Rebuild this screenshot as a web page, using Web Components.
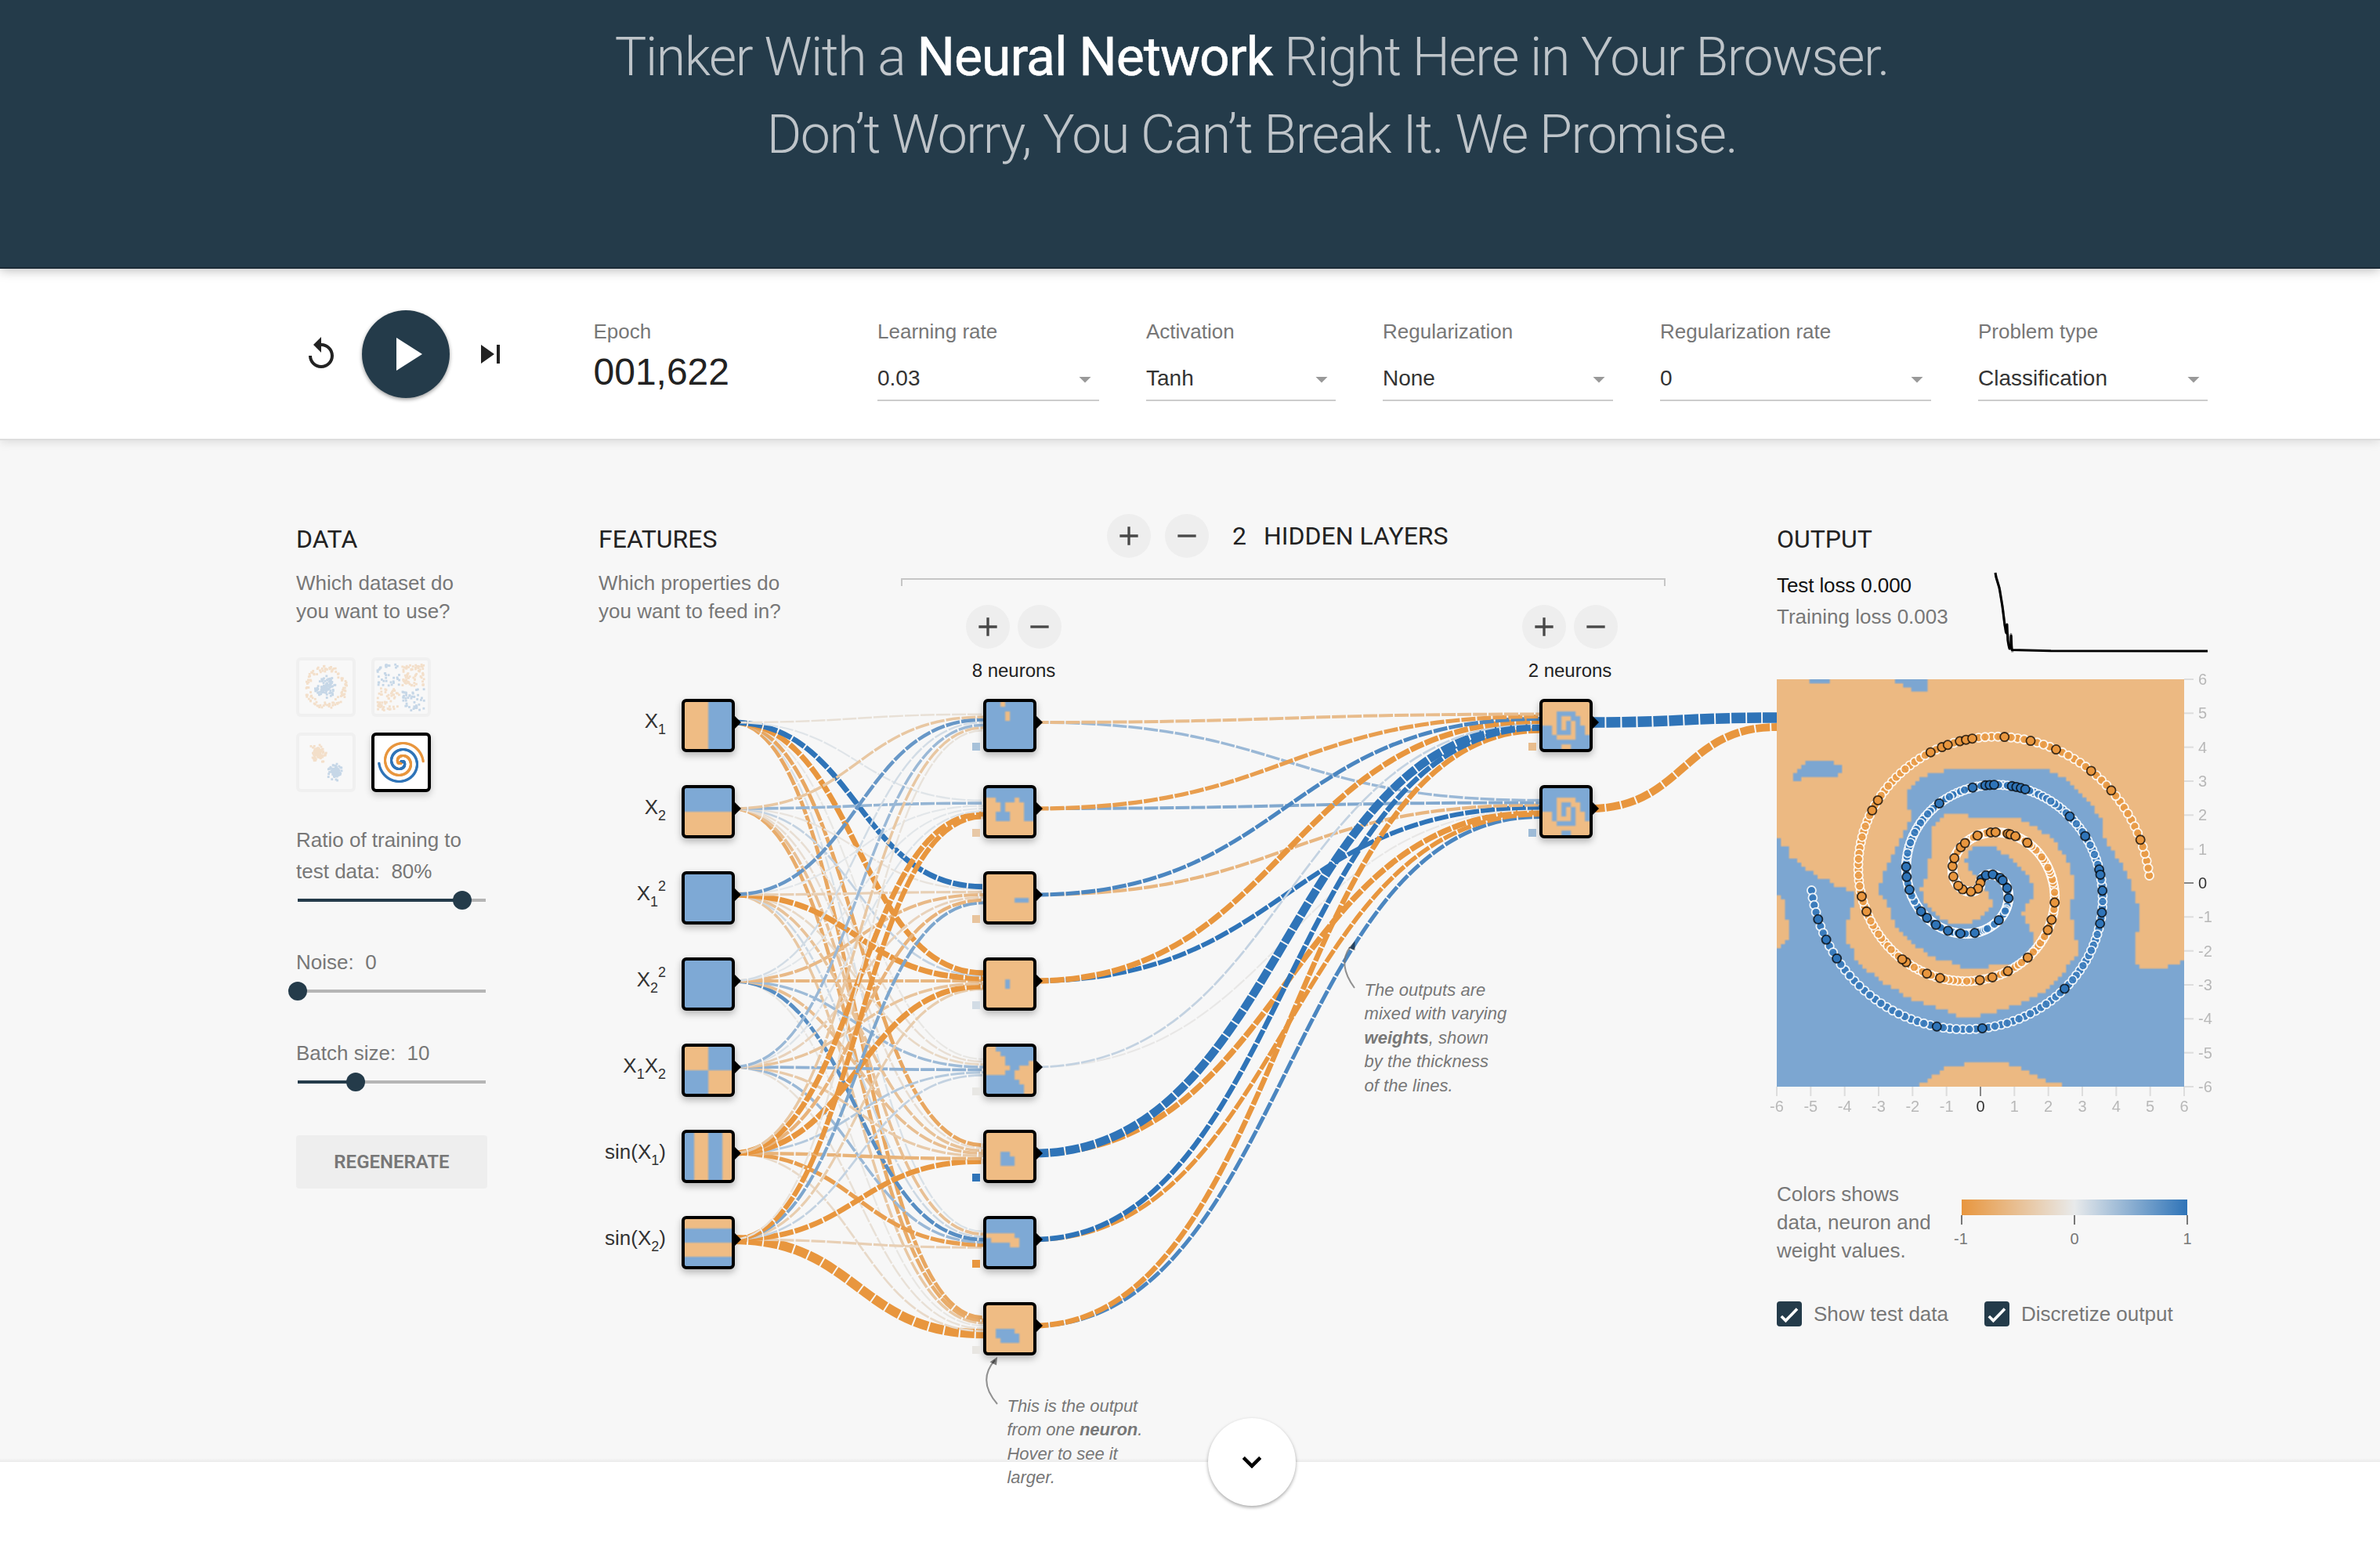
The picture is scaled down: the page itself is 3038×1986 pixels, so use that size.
<!DOCTYPE html>
<html lang="en">
<head>
<meta charset="utf-8">
<title>A Neural Network Playground</title>
<style>
html,body{margin:0;padding:0;background:#fff}
body{font-family:"Liberation Sans",Helvetica,Arial,sans-serif;color:#777;width:3038px;height:1986px;overflow:hidden}
</style>
</head>
<body>
<nn-playground></nn-playground>
<script>
const ORANGE=[232,150,62], GREY=[232,234,235], BLUE=[47,116,184];
const CELL_O='#efbc84', CELL_B='#7ea9d5';
function weightColor(w){
  const t=Math.min(1,Math.abs(w)), end=w<0?ORANGE:BLUE;
  return 'rgb('+GREY.map((g,i)=>Math.round(g+(end[i]-g)*t)).join(',')+')';
}
function rng(seed){return ()=>{seed=(seed*1664525+1013904223)>>>0;return seed/4294967296;};}
function define(name,html,setup){
  const t=document.createElement('template');t.innerHTML=html;
  customElements.define(name,class extends HTMLElement{
    connectedCallback(){
      if(this.shadowRoot)return;
      this.attachShadow({mode:'open'}).appendChild(t.content.cloneNode(true));
      if(setup)setup(this.shadowRoot,this);
    }
  });
}
const NS='http://www.w3.org/2000/svg';
function add(parent,tag,attrs,text){
  const e=document.createElementNS(NS,tag);
  for(const k in attrs)e.setAttribute(k,attrs[k]);
  if(text!==undefined)e.textContent=text;
  parent.appendChild(e);return e;
}

/* ---------- header ---------- */
define('nn-hero',`<style>
:host{display:block;box-sizing:border-box;height:343px;background:#243b4a;border-bottom:2px solid #1b2a36;padding:24px 0 0 158px;text-align:center;
 font:300 68px/99px Roboto,sans-serif;letter-spacing:-1.42px;color:#bec4c9;position:relative;z-index:3;box-shadow:0 2px 14px rgba(0,0,0,.28)}
b{font-weight:400;color:#fff;letter-spacing:-1.05px;-webkit-text-stroke:.5px #fff}
</style><div>Tinker With a <b>Neural Network</b> Right Here in Your Browser.</div><div>Don’t Worry, You Can’t Break It. We Promise.</div>`);

define('nn-select',`<style>
:host{display:block;flex:none}
.l{font-size:26px;line-height:30px;color:#777;white-space:nowrap}
.v{display:flex;justify-content:space-between;align-items:flex-start;height:47px;margin-top:25.5px;border-bottom:2px solid #ccc;font-size:28px;line-height:40px;color:#333}
svg{width:36px;height:36px;margin-top:3px;fill:#999}
</style><div class="l"><slot name="label"></slot></div><div class="v"><slot></slot><svg viewBox="0 0 24 24"><path d="M7 10l5 5 5-5z"/></svg></div>`,
(r,h)=>{h.style.width=h.getAttribute('w')+'px';});

define('nn-toolbar',`<style>
:host{display:flex;box-sizing:border-box;height:219px;background:#fff;border-bottom:2px solid #ddd;padding-left:386px;position:relative;z-index:2;box-shadow:0 2px 12px rgba(0,0,0,.12)}
.btns{display:flex;align-items:center;gap:28px;height:218px}
.ic{width:48px;height:48px;fill:#222}
.play{width:112px;height:112px;border-radius:50%;background:#243b4a;display:flex;align-items:center;justify-content:center;box-shadow:0 2px 5px rgba(0,0,0,.4)}
.play svg{width:72px;height:72px;fill:#fff}
.ep{margin-left:107.500px;width:362.500px;padding-top:64.5px}
.l{font-size:26px;line-height:30px}
.n{font-size:48px;line-height:48px;margin-top:13.5px;color:#222}
.sel{display:flex;gap:60px;padding-top:64.5px}
</style>
<div class="btns">
<svg class="ic" viewBox="0 0 24 24"><path d="M12 5V1L7 6l5 5V7c3.31 0 6 2.69 6 6s-2.69 6-6 6-6-2.69-6-6H4c0 4.42 3.58 8 8 8s8-3.58 8-8-3.58-8-8-8z"/></svg>
<div class="play"><svg viewBox="0 0 24 24"><path d="M8 5v14l11-7z"/></svg></div>
<svg class="ic" viewBox="0 0 24 24"><path d="M6 18l8.5-6L6 6v12zM16 6v12h2V6h-2z"/></svg>
</div>
<div class="ep"><div class="l">Epoch</div><div class="n">001,622</div></div>
<div class="sel">
<nn-select w="283"><span slot="label">Learning rate</span>0.03</nn-select>
<nn-select w="242"><span slot="label">Activation</span>Tanh</nn-select>
<nn-select w="294"><span slot="label">Regularization</span>None</nn-select>
<nn-select w="346"><span slot="label">Regularization rate</span>0</nn-select>
<nn-select w="293"><span slot="label">Problem type</span>Classification</nn-select>
</div>`);

/* ---------- shared column heading ---------- */
define('nn-heading',`<style>
:host{display:block;padding-top:109.500px}
h4{margin:0;font:400 32px/32px Roboto,sans-serif;color:#222;white-space:nowrap}
p{margin:22px 0 0;font-size:26px;line-height:36.4px;white-space:nowrap}
</style><h4><slot name="title"></slot></h4><p><slot></slot></p>`);

/* ---------- data column ---------- */
define('nn-dataset',`<style>
:host{display:block;box-sizing:border-box;width:76px;height:76px;border:4px solid rgba(0,0,0,.13);border-radius:6px;opacity:.24}
:host([on]){border-color:#000;opacity:1;background:#fff;box-shadow:0 4px 10px rgba(0,0,0,.2)}
:host(:not([on])){background:#fff}
svg{display:block;width:68px;height:68px}
</style><svg viewBox="-6 -6 12 12"></svg>`,(r,h)=>{
  const svg=r.querySelector('svg'),rand=rng(+h.getAttribute('seed')||7),kind=h.getAttribute('kind');
  const dot=(x,y,c)=>add(svg,'rect',{x:x-.25,y:-y-.25,width:.5,height:.5,fill:c});
  const B='#2f74b8',O='#e8963e';
  const gauss=()=>{const u=rand()+rand()+rand()+rand()+rand()+rand();return (u-3)*1.41;};
  for(let i=0;i<9;i++)rand();
  if(kind==='circle'){
    for(let i=0;i<105;i++){const a=rand()*6.2832,q=rand()*2.5;dot(q*Math.sin(a),q*Math.cos(a),B);}
    for(let i=0;i<105;i++){const a=rand()*6.2832,q=3.5+rand()*1.3;dot(q*Math.sin(a),q*Math.cos(a),O);}
  }else if(kind==='xor'){
    for(let i=0;i<210;i++){let x=rand()*10-5,y=rand()*10-5;x+=x>0?.3:-.3;y+=y>0?.3:-.3;dot(x,y,x*y>0?O:B);}
  }else if(kind==='gauss'){
    for(let i=0;i<110;i++){dot(-1.8+gauss()*.75,2+gauss()*.75,O);dot(2.1+gauss()*.75,-2.1+gauss()*.75,B);}
  }else{
    for(let i=0;i<250;i++){const q=i/50,t=1.75*i/250*2*Math.PI;dot(q*Math.sin(t),q*Math.cos(t),B);dot(-q*Math.sin(t),-q*Math.cos(t),O);}
  }
});
define('nn-slider',`<style>
:host{display:block;margin-bottom:47px}
.t{font-size:26px;line-height:40px;white-space:nowrap}
.s{display:flex;align-items:center;height:24px;margin-top:5px;margin-left:2px;width:240px}
.a{height:4px;background:#243b4a;width:var(--p);flex:none}
.k{width:24px;height:24px;border-radius:50%;background:#243b4a;margin:0 -12px;flex:none;z-index:1}
.b{height:4px;background:#b5b5b5;flex:1}
</style><div class="t"><slot></slot></div><div class="s"><div class="a"></div><div class="k"></div><div class="b"></div></div>`,
(r,h)=>h.style.setProperty('--p',h.getAttribute('at')+'px'));
define('nn-data',`<style>
:host{display:block;width:244px}
.g{display:grid;grid-template-columns:76px 76px;gap:20px;margin:40.7px 0 40.7px}
button{display:block;width:244px;height:68px;margin-top:56px;border:0;border-radius:4px;background:#eee;color:#777;font:600 24px Roboto,sans-serif;padding:0}
nn-slider:last-of-type{margin-bottom:0}
</style><nn-heading><span slot="title">DATA</span>Which dataset do<br>you want to use?</nn-heading>
<div class="g"><nn-dataset kind="circle" seed="11"></nn-dataset><nn-dataset kind="xor" seed="29"></nn-dataset><nn-dataset kind="gauss" seed="5"></nn-dataset><nn-dataset kind="spiral" on></nn-dataset></div>
<nn-slider at="210">Ratio of training to<br>test data:&nbsp; 80%</nn-slider>
<nn-slider at="0">Noise:&nbsp; 0</nn-slider>
<nn-slider at="74">Batch size:&nbsp; 10</nn-slider>
<button>REGENERATE</button>`);

/* ---------- nodes ---------- */
const GRIDS={
 x1:Array(10).fill('OOOOOBBBBB'),
 x2:[...Array(5).fill('BBBBBBBBBB'),...Array(5).fill('OOOOOOOOOO')],
 sq:Array(10).fill('BBBBBBBBBB'),
 xx:[...Array(5).fill('OOOOOBBBBB'),...Array(5).fill('BBBBBOOOOO')],
 s1:Array(10).fill('BBOOOBBBOO'),
 s2:'OOBBBOOOBB'.split('').map(c=>c.repeat(10)),
 n1:['BBBOBBBBBB','BBBBBBBBBB','BBBBOBBBBB','BBBBOBBBBB',...Array(6).fill('BBBBBBBBBB')],
 n2:['BBBBBBBBBB','BBBBBBBBBB','OOBBBBOBBB','OOOBOOOOBB','OOOBOOOOBB','OOBBBOOOBB','OOBBBOOOBB','OOOOOOOOOO','OOOOOOOOOO','OOOOOOOOOO'],
 n3:[...Array(5).fill('OOOOOOOOOO'),'OOOOOOBBBO',...Array(4).fill('OOOOOOOOOO')],
 n4:[...Array(4).fill('OOOOOOOOOO'),'OOOOBOOOOO','OOOOBOOOOO',...Array(4).fill('OOOOOOOOOO')],
 n5:['OOBBBBBBBB','OOOBBBBBBB','OOOOBBBBBB','OOOOBBBBBO','OOOOOBBOOO','OOOOBBOOOO','BBBBBBOOOO','BBBBBBBOOO','BBBBBBBBOO','BBBBBBBBOO'],
 n6:[...Array(4).fill('OOOOOOOOOO'),'OOOBBOOOOO','OOOBBBOOOO','OOOBBBOOOO',...Array(3).fill('OOOOOOOOOO')],
 n7:[...Array(3).fill('BBBBBBBBBB'),'OOOOOOBBBB','BOOOOOOBBB','BBBBBOOBBB',...Array(4).fill('BBBBBBBBBB')],
 n8:[...Array(5).fill('OOOOOOOOOO'),'OOBBBBOOOO','OOBBBBBOOO','OOOBBBBOOO',...Array(2).fill('OOOOOOOOOO')],
 h1:['OOOOOOOOOO','OOOOOOOOOO','OOOBBBBOOO','OOOBOOBBOO','OOOBOBOBOO','BBOBOBOBBO','BBOBBBOBBO','BBBOOOOBBB','BBBBBBBBBB','BBBBOOBBBB'],
};
GRIDS.h2=GRIDS.h1.map(s=>s.replace(/./g,c=>c==='O'?'B':'O'));
define('nn-node',`<style>
:host{display:block;position:relative;width:68px;height:68px;flex:none}
canvas{display:block;box-sizing:border-box;width:68px;height:68px;border:4px solid #000;border-radius:6px;background:#000;box-shadow:0 4px 10px rgba(0,0,0,.28)}
svg{position:absolute;left:67px;top:22px;width:10px;height:16px}
.bias{position:absolute;left:-14.5px;top:56px;width:10px;height:10px}
</style><canvas width="20" height="20"></canvas><svg viewBox="0 0 10 16"><path d="M0 0h1l8 8-8 8H0z"/></svg><div class="bias"></div>`,(r,h)=>{
  const c=r.querySelector('canvas').getContext('2d');
  GRIDS[h.getAttribute('grid')].forEach((row,y)=>[...row].forEach((v,x)=>{c.fillStyle=v==='O'?CELL_O:CELL_B;c.fillRect(x*2,y*2,2,2);}));
  const b=h.getAttribute('bias');
  if(b!==null)r.querySelector('.bias').style.background=weightColor(+b);
});
define('nn-feature',`<style>
:host{display:flex;justify-content:flex-end;height:68px}
.l{font-size:26px;line-height:36px;padding-top:10px;width:120px;text-align:right;margin-right:20px;color:#333;white-space:nowrap}
::slotted(sub),::slotted(sup){font-size:18px;line-height:0;position:relative;vertical-align:baseline}
::slotted(sub){top:8px}::slotted(sup){top:-12.5px}
</style><div class="l"><slot></slot></div>`,(r,h)=>{
  const n=document.createElement('nn-node');n.setAttribute('grid',h.getAttribute('grid'));r.appendChild(n);
});
define('nn-features',`<style>
:host{display:block;width:386px;box-sizing:border-box}
.c{display:flex;flex-direction:column;gap:42px;width:174px;margin-top:93.7px}
</style><nn-heading><span slot="title">FEATURES</span>Which properties do<br>you want to feed in?</nn-heading>
<div class="c">
<nn-feature grid="x1">X<sub>1</sub></nn-feature><nn-feature grid="x2">X<sub>2</sub></nn-feature>
<nn-feature grid="sq">X<sub>1</sub><sup>2</sup></nn-feature><nn-feature grid="sq">X<sub>2</sub><sup>2</sup></nn-feature>
<nn-feature grid="xx">X<sub>1</sub>X<sub>2</sub></nn-feature>
<nn-feature grid="s1">sin(X<sub>1</sub>)</nn-feature><nn-feature grid="s2">sin(X<sub>2</sub>)</nn-feature>
</div>`);

/* ---------- hidden layers ---------- */
define('nn-round',`<style>
:host{display:flex;width:56px;height:56px;border-radius:50%;background:#eee;align-items:center;justify-content:center;flex:none}
svg{width:40px;height:40px;fill:#484848}
</style><svg viewBox="0 0 24 24"><path/></svg>`,(r,h)=>r.querySelector('path').setAttribute('d',h.hasAttribute('plus')?'M19 13h-6v6h-2v-6H5v-2h6V5h2v6h6v2z':'M19 13H5v-2h14v2z'));
define('nn-layer',`<style>
:host{display:flex;flex-direction:column;align-items:center;width:122px}
.b{display:flex;gap:10px}
.t{font-size:24px;line-height:28px;color:#222;margin-top:14px;white-space:nowrap}
.n{display:flex;flex-direction:column;gap:42px;margin-top:22px;margin-right:10px}
</style><div class="b"><nn-round plus></nn-round><nn-round></nn-round></div><div class="t"><slot name="count"></slot></div><div class="n"><slot></slot></div>`);
define('nn-hidden',`<style>
:host{display:block;width:976px}
.h{display:flex;align-items:center;height:56px;padding:94px 0 0 263px;font:400 32px/32px Roboto,sans-serif;color:#222;white-space:nowrap}
.h nn-round+nn-round{margin-left:18px}
.br{height:8px;margin-top:26px;border:2px solid #c6c6c6;border-bottom:0}
.ls{display:flex;justify-content:space-between;padding:24px 61px 0 83px}
</style>
<div class="h"><nn-round plus></nn-round><nn-round></nn-round><span style="margin-left:30px">2</span><span style="margin-left:22px">HIDDEN LAYERS</span></div>
<div class="br"></div>
<div class="ls">
<nn-layer><span slot="count">8 neurons</span>
<nn-node grid="n1" bias=".35"></nn-node><nn-node grid="n2" bias="-.4"></nn-node><nn-node grid="n3" bias="-.45"></nn-node><nn-node grid="n4" bias=".12"></nn-node>
<nn-node grid="n5" bias="-.04"></nn-node><nn-node grid="n6" bias="1"></nn-node><nn-node grid="n7" bias="-1"></nn-node><nn-node grid="n8" bias="-.05"></nn-node></nn-layer>
<nn-layer><span slot="count">2 neurons</span><nn-node grid="h1" bias="-.55"></nn-node><nn-node grid="h2" bias=".4"></nn-node></nn-layer>
</div>`);

/* ---------- weights ---------- */
const W1=[ /* one row per first-layer neuron, one value per feature */
 [-.12,-.42,.7,.12,.42,-.42,-.1],
 [.05,.45,.03,.03,.06,-1.35,-1.2],
 [1.35,-.08,-.32,-.58,-.28,-.65,.58],
 [-1.4,.2,-1.45,-.62,-.45,-1.45,-.35],
 [-.04,-.14,-.22,.4,.48,.28,.2],
 [-.8,-.15,-.48,-.52,-.38,-.66,-1.3],
 [.08,-.5,.15,.78,.42,-.9,-.32],
 [-.8,-.74,-.42,-.05,-.12,-.2,-2.8]];
const W2=[[-.55,-.9,.85,-1.45,.2,2.4,1.25,-1.3],[.42,.55,-.62,1.1,-.03,-1.5,-1.0,.85]];
const W3=[[3.2,-2.2]];
define('nn-links',`<style>
:host{display:block;position:absolute;left:0;top:0;pointer-events:none}
svg{display:block}
</style><svg width="2268" height="1424" viewBox="0 562 2268 1424" fill="none"></svg>`,(r)=>{
  const svg=r.querySelector('svg');
  const X=[870,1255,1965,2268],links=[];
  [W1,W2,W3].forEach((W,l)=>W.forEach((row,t)=>row.forEach((w,s)=>{
    const n=row.length,x0=X[l]+64,x1=X[l+1],y0=922+110*s,y1=922+110*t+(s-(n-1)/2)/n*24,m=(x0+x1)/2;
    links.push([w,`M${x0} ${y0}C${m} ${y0} ${m} ${y1} ${x1} ${y1}`]);
  })));
  links.reverse().forEach(([w,d])=>add(svg,'path',{d,stroke:weightColor(w),'stroke-width':Math.min(20,2+3.6*Math.abs(w)),'stroke-dasharray':'18 2','stroke-dashoffset':-1.33}));
});
define('nn-callout',`<style>
:host{display:block;position:absolute;font-style:italic;font-size:22px;line-height:30.4px;color:#777;white-space:nowrap}
svg{position:absolute;left:-34px;top:-60px;width:40px;height:70px;overflow:visible}
</style><svg fill="none"><path class="c" stroke="#777" stroke-opacity=".8" stroke-width="2"/><path class="a" fill="#000" fill-opacity=".5"/></svg><slot></slot>`,(r,h)=>{
  r.querySelector('.c').setAttribute('d',h.getAttribute('curve'));
  r.querySelector('.a').setAttribute('d',h.getAttribute('head'));
});

/* ---------- output ---------- */
const GX=71,GY=445,GW=1315,GH=1019; /* coordinate frame of the traced boundary */
const REGIONS=[
[71,843,85,850,85,858,105,865,110,885,135,897,150,912,190,928,195,937,245,950,260,963,310,975,323,985,320,1003,308,1020,305,1040,295,1050,295,1098,308,1110,322,1125,325,1145,350,1165,375,1180,400,1197,425,1210,455,1218,480,1235,520,1248,560,1260,600,1268,640,1280,650,1288,725,1288,745,1280,800,1272,845,1260,900,1242,930,1228,960,1210,985,1190,1005,1165,1028,1150,1042,1130,1042,1105,1030,1090,1030,1055,1018,1045,1018,1005,1030,985,1030,945,1020,925,1015,905,1000,880,975,860,950,840,920,820,895,808,862,802,855,794,700,793,680,785,620,784,605,792,585,803,570,825,570,880,560,900,560,925,545,950,535,970,548,985,550,1003,580,1025,600,1040,630,1055,660,1062,685,1060,700,1050,725,1040,750,1025,768,1005,755,990,750,975,728,955,710,935,690,915,675,900,690,880,710,865,765,862,800,880,840,900,870,925,900,960,895,990,865,1030,880,1055,898,1080,895,1110,870,1140,840,1155,775,1160,745,1167,680,1167,640,1155,580,1143,540,1122,500,1100,465,1070,440,1045,435,1015,410,990,400,970,410,950,415,925,435,900,460,865,480,835,500,800,505,778,490,755,492,730,515,705,555,685,615,672,640,667,935,667,960,680,1000,690,1020,710,1055,735,1095,770,1120,800,1125,840,1150,870,1180,905,1205,940,1225,985,1242,1020,1242,1060,1228,1100,1230,1155,1245,1167,1330,1167,1360,1155,1390,1147,1390,1470,990,1470,985,1455,940,1448,910,1435,880,1425,850,1410,780,1405,685,1403,665,1413,620,1415,590,1432,560,1445,535,1458,528,1470,60,1470,60,1118,95,1110,110,1085,108,1050,95,1025,92,1000,75,985,60,985,60,843],
[175,440,243,440,243,455,178,455],
[452,440,558,440,558,475,505,475,500,468,478,462,472,455,455,450],
[122,685,130,677,150,660,178,650,252,650,258,658,275,660,283,670,280,680,268,688,150,690,145,698,125,698]];
const TEST_B=[204,1045,230,1096,264,1143,587,1314,734,1318,1000,1218,1114,1055,1120,1028,1122,972,1114,933,1111,920,1066,838,1017,788,875,719,858,716,845,714,830,712,772,708,757,709,742,711,703,716,595,755,488,914,489,940,499,971,537,1025,556,1042,585,1059,623,1073,663,1080,710,1079,788,1048,819,991,815,968,803,948,793,941,767,933,748,936,731,945];
const TEST_O=[1244,846,1151,723,1085,674,972,620,890,599,806,588,702,593,683,596,662,600,622,608,604,614,568,628,397,748,378,773,345,988,360,1025,477,1145,488,1153,555,1181,598,1192,726,1197,767,1190,817,1175,880,1141,945,1072,958,1046,968,1003,879,853,840,837,828,833,815,830,776,827,761,828,718,836,678,855,664,866,643,892,639,912,641,940,656,961,670,969,698,976,720,967,730,955];
define('nn-heatmap',`<style>
:host{display:block;position:relative;width:580px;height:570px}
canvas{display:block;width:520px;height:520px}
svg{position:absolute;left:-20px;top:-20px}
text{font-size:20px;font-family:"Liberation Sans",sans-serif}
</style><canvas width="200" height="200"></canvas><svg width="600" height="590" viewBox="-20 -20 600 590"></svg>`,(r)=>{
  const c=r.querySelector('canvas').getContext('2d'),svg=r.querySelector('svg');
  const path=new Path2D();
  REGIONS.forEach(p=>{for(let i=0;i<p.length;i+=2)path[i?'lineTo':'moveTo']((p[i]-GX)/GW*100,(p[i+1]-GY)/GH*100);path.closePath();});
  for(let y=0;y<100;y++)for(let x=0;x<100;x++){
    c.fillStyle=c.isPointInPath(path,x+.5,y+.5)?'#7ca6d1':'#ecb982';c.fillRect(x*2,y*2,2,2);
  }
  const S=520/12,train=[],test=[];
  const arm=(sign,held,color)=>{
    const pts=[];
    for(let i=0;i<250;i++){const q=i/50,t=1.75*i/250*2*Math.PI;pts.push({x:260+sign*q*Math.sin(t)*S,y:260-sign*q*Math.cos(t)*S,color});}
    for(let i=0;i<held.length;i+=2){
      const hx=(held[i]-GX)/GW*520,hy=(held[i+1]-GY)/GH*520;
      pts.reduce((a,b)=>Math.hypot(a.x-hx,a.y-hy)<Math.hypot(b.x-hx,b.y-hy)?a:b).test=true;
    }
    pts.forEach(p=>(p.test?test:train).push(p));
  };
  arm(1,TEST_B,'#2f74b8');arm(-1,TEST_O,'#e8963e');
  const rand=rng(42);
  for(let i=train.length-1;i>0;i--){const j=Math.floor(rand()*(i+1));[train[i],train[j]]=[train[j],train[i]];}
  train.forEach(p=>add(svg,'circle',{cx:p.x,cy:p.y,r:5.5,fill:p.color,stroke:'#fff','stroke-width':1.8,opacity:.85}));
  test.forEach(p=>add(svg,'circle',{cx:p.x,cy:p.y,r:5.6,fill:p.color,stroke:'#000','stroke-opacity':.75,'stroke-width':1.8}));
  for(let v=-6;v<=6;v++){
    const p=260+v*S,q=260-v*S,tc=v?'#ddd':'#888',lc=v?'#b8b8b8':'#333';
    add(svg,'path',{d:`M${p} 520v12`,stroke:tc,'stroke-width':2});
    add(svg,'path',{d:`M520 ${q}h12`,stroke:tc,'stroke-width':2});
    add(svg,'text',{x:p,y:552,'text-anchor':'middle',fill:lc},String(v));
    add(svg,'text',{x:538,y:q+7,fill:lc},String(v));
  }
});
define('nn-check',`<style>
:host{display:flex;align-items:center;font-size:26px;line-height:32px;white-space:nowrap}
svg{width:32px;height:32px;margin-right:15px;flex:none}
</style><svg viewBox="0 0 32 32"><rect width="32" height="32" rx="4" fill="#243b4a"/><path d="M5.8 19l5.6 5.6L26 9.6" fill="none" stroke="#fff" stroke-width="3.6"/></svg><slot></slot>`);
define('nn-output',`<style>
:host{display:block;width:600px;margin-left:142px}
.loss{display:flex;height:140px;margin-top:23px;font-size:26px;line-height:40px;white-space:nowrap}
.loss>div{width:276px}
.te{color:#111;letter-spacing:-.1px}
.loss svg{overflow:visible}
nn-heading{height:32.5px}
.lg{display:flex;margin-top:68.5px;font-size:26px;line-height:36.4px;white-space:nowrap}
.lg>div{width:256px}
.lg svg{margin:25.5px 0 0 -40px}
.ck{display:flex;margin-top:46px;gap:46px}
text{font-family:"Liberation Sans",sans-serif;font-size:20px;fill:#777}
</style>
<nn-heading><span slot="title">OUTPUT</span></nn-heading>
<div class="loss"><div><div class="te">Test loss 0.000</div><div>Training loss 0.003</div></div>
<svg width="276" height="110" viewBox="2544 727 276 110" fill="none" stroke-linejoin="round">
<path d="M2547 732l6 22 4 26 3 26 3 4 2 16 2-16.5v12l2 11" stroke="#888" stroke-width="3"/>
<path d="M2547 731l1 6 4 13 4 24 3 24 2 10 1-11 .8 20 1.2 7 1 4 1.600-3 .6-13.5.8 18 50 1.2 200 .3" stroke="#000" stroke-width="3"/></svg></div>
<nn-heatmap></nn-heatmap>
<div class="lg"><div>Colors shows<br>data, neuron and<br>weight values.</div>
<svg width="340" height="64" viewBox="0 0 340 64"><defs><linearGradient id="g"><stop offset="0" stop-color="#e8963e"/><stop offset=".5" stop-color="#e8eaeb"/><stop offset="1" stop-color="#2f74b8"/></linearGradient></defs>
<rect x="20" width="288" height="20" fill="url(#g)"/><path d="M20 20v12M164 20v12M308 20v12" stroke="#777" stroke-width="2"/>
<text x="19" y="57" text-anchor="middle">-1</text><text x="164" y="57" text-anchor="middle">0</text><text x="308" y="57" text-anchor="middle">1</text></svg></div>
<div class="ck"><nn-check>Show test data</nn-check><nn-check>Discretize output</nn-check></div>`);

/* ---------- page ---------- */
define('nn-more',`<style>
:host{display:flex;position:absolute;left:1542px;top:1248px;width:112px;height:112px;border-radius:50%;background:#fff;align-items:center;justify-content:center;box-shadow:0 2px 4px rgba(0,0,0,.35)}
svg{width:48px;height:48px}
</style><svg viewBox="0 0 24 24"><path d="M16.59 8.59L12 13.17 7.41 8.59 6 10l6 6 6-6z" stroke="#000" stroke-width=".3"/></svg>`);
define('nn-playground',`<style>
:host{display:block;position:relative;width:3038px;height:1986px;background:#fff;overflow:hidden}
main{display:flex;position:relative;box-sizing:border-box;height:1304px;background:linear-gradient(#f7f7f7,#f7f7f7 1299px,#ebebeb 1304px);padding-left:378px}
nn-features{margin-left:142px}
nn-features,nn-hidden,nn-output{position:relative}
</style>
<nn-hero></nn-hero><nn-toolbar></nn-toolbar>
<main><nn-links></nn-links><nn-data></nn-data><nn-features></nn-features><nn-hidden></nn-hidden><nn-output></nn-output>
<nn-callout style="left:1285.500px;top:1218px;letter-spacing:-.05px" curve="M21 72Q-5 42 18 16" head="M21 12l-9.500 6.500 8.500 4z">This is the output<br>from one <b>neuron</b>.<br>Hover to see it<br>larger.</nn-callout>
<nn-callout style="left:1741.500px;top:687px;letter-spacing:.05px" curve="M21 72Q-1 42 15 20" head="M21.500 12l-8 9 8 3z">The outputs are<br>mixed with varying<br><b>weights</b>, shown<br>by the thickness<br>of the lines.</nn-callout>
<nn-more></nn-more>
</main>`);
</script>
</body>
</html>
